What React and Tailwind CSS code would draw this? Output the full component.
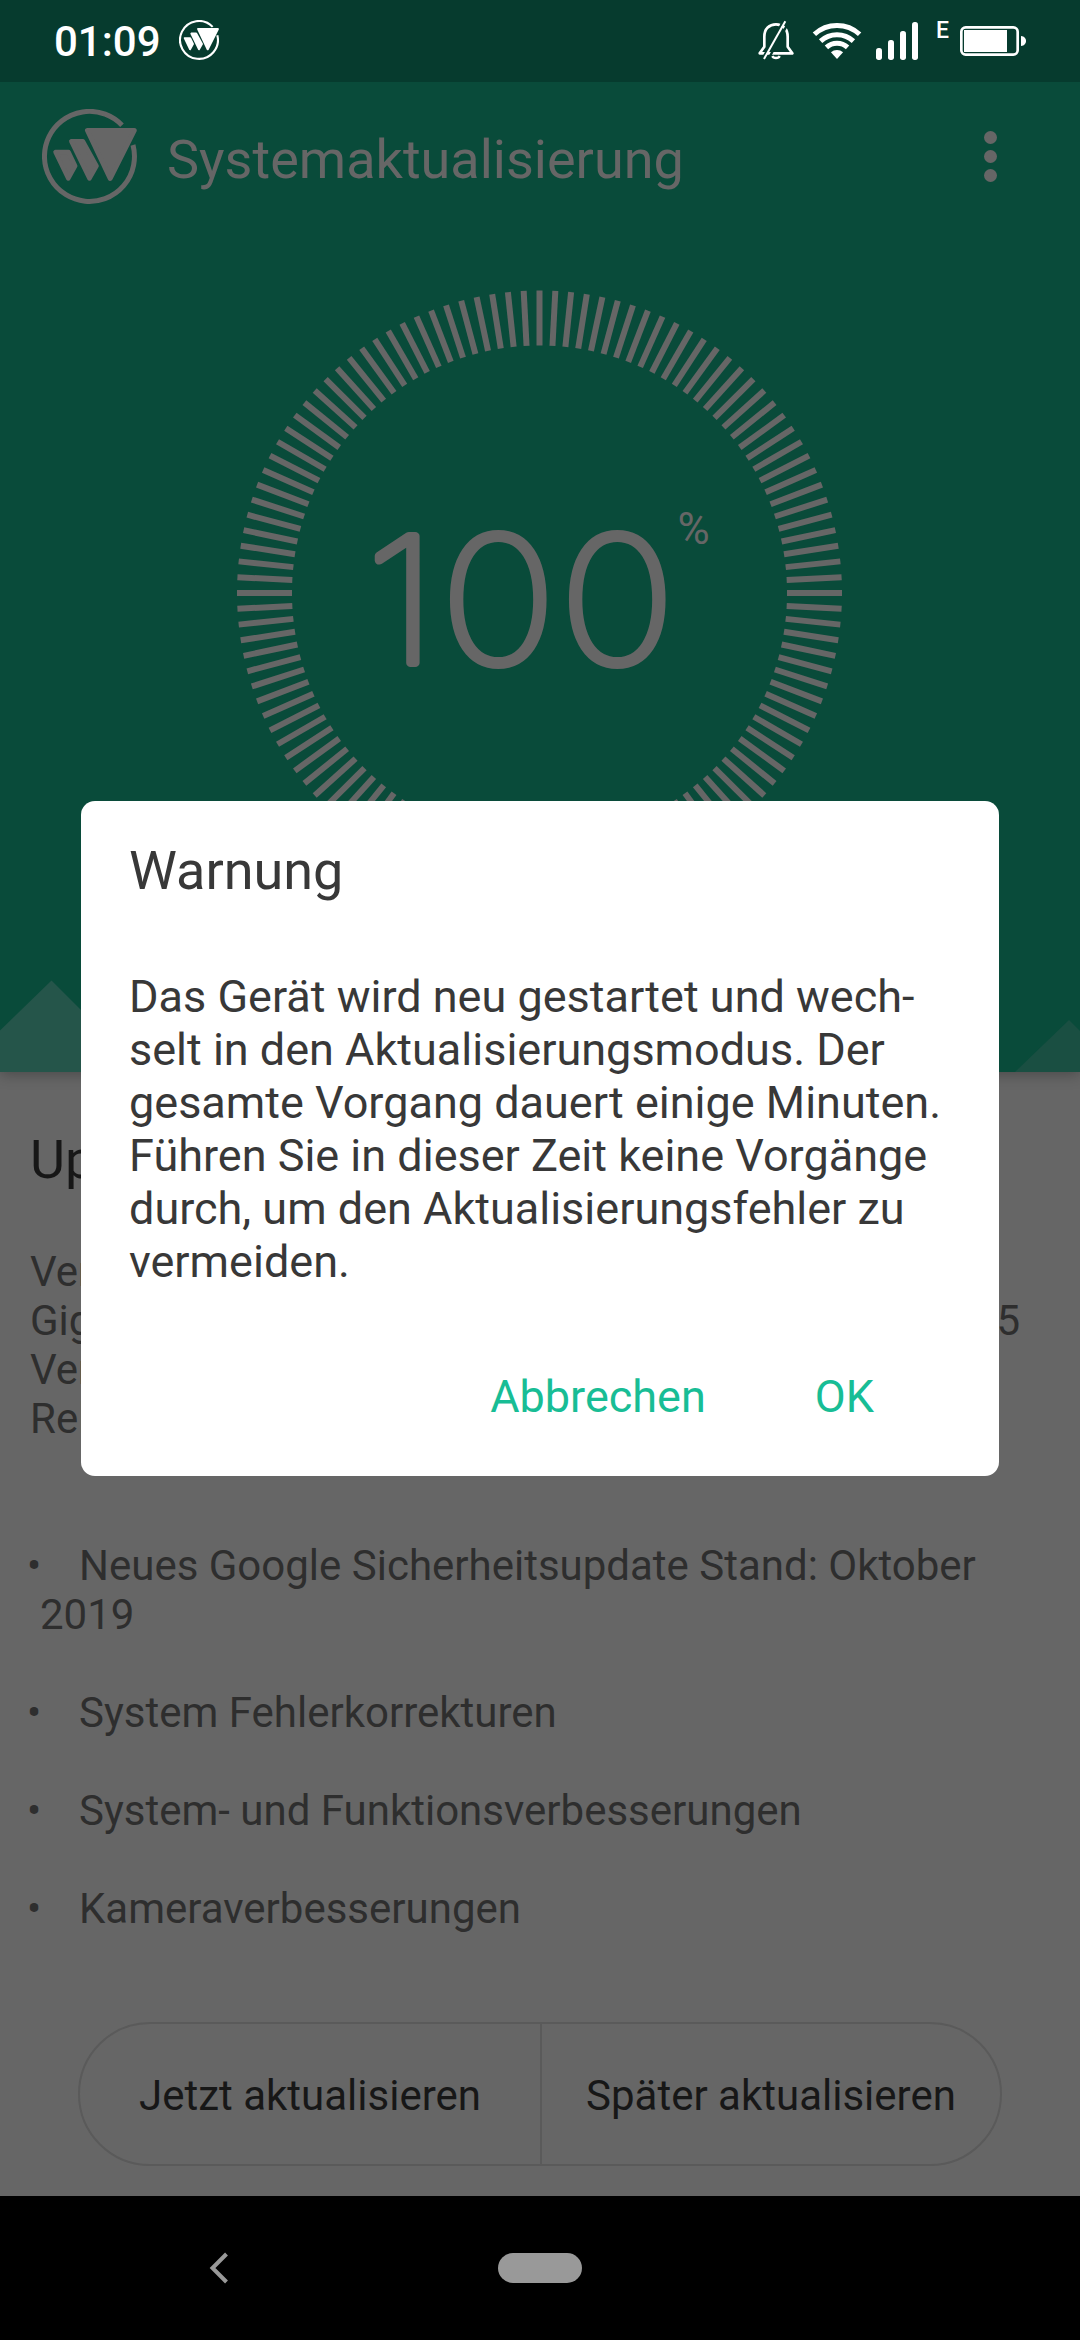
const TICKS = Array.from({ length: 120 }, (_, i) => i * 3);

const CHANGES = [
  'System Fehlerkorrekturen',
  'System- und Funktionsverbesserungen',
  'Kameraverbesserungen'
];

function Logo({ className }) {
  return (
    <svg viewBox="0 0 95 95" className={className} fill="currentColor" stroke="currentColor" strokeLinejoin="round">
      <path d="M91 36A45 45 0 1 1 80 16.3" fill="none" strokeWidth="5" />
      <path d="M45.5 21.5H92.3L68.2 69.5Z" strokeWidth="5" />
      <path d="M29.3 32.2H40.8L54.6 57L47.5 69.5Z" strokeWidth="4.5" />
      <path d="M13.5 43H26.5L33.2 57L26.3 69.5Z" strokeWidth="4.5" />
    </svg>
  );
}

function StatusBar() {
  return (
    <div className="relative z-20 h-[82px] bg-[#063b2e] text-white flex items-start pl-[54px] pr-[53px] pt-5">
      <span className="text-[42px] leading-[44px] font-medium w-[106px] whitespace-nowrap">01:09</span>
      <Logo className="w-10 h-10 ml-[19px]" />

      <div className="ml-auto flex">
        <svg viewBox="111 60 114 120" className="w-[38px] h-10" fill="none" stroke="currentColor" strokeWidth="8">
          <path d="M133 140V110C133 86 148 73 168 73S203 86 203 110V140L217 160H119Z" strokeLinejoin="round" />
          <path d="M157 168C160 176 176 176 179 168" strokeWidth="7" />
          <path d="M125 181L189 65M143 181L207 65" stroke="#063b2e" strokeWidth="7" />
          <path d="M132 177L196 64" strokeWidth="6" />
        </svg>
        <svg viewBox="276 60 150 120" className="w-[50px] h-10 ml-[17px]" fill="none" stroke="currentColor" strokeWidth="15">
          <path d="M283.2 102.8A100.5 100.5 0 0 1 418.8 102.8" />
          <path d="M301.8 123.1A73 73 0 0 1 400.2 123.1" />
          <path d="M319.3 142.3A47 47 0 0 1 382.7 142.3" />
          <path d="M351 177L332.8 157A27 27 0 0 1 369.2 157Z" fill="currentColor" stroke="none" />
        </svg>
        <svg viewBox="465 60 132 120" className="w-11 h-10 ml-[13px]" fill="currentColor">
          <rect x="468" y="144" width="18" height="36" rx="8" />
          <rect x="504" y="120" width="18" height="60" rx="8" />
          <rect x="540" y="93" width="18" height="87" rx="8" />
          <rect x="576" y="66" width="18" height="114" rx="8" />
        </svg>
        <span className="w-10 pl-[17px] text-[23px] leading-[22px] font-medium">E</span>
        <svg viewBox="717 60 204 120" className="w-[68px] h-10" fill="currentColor">
          <rect x="724" y="82" width="169" height="82" rx="13" fill="none" stroke="currentColor" strokeWidth="8" />
          <rect x="732" y="90" width="129" height="66" />
          <path d="M903 108C923 109 923 137 903 138Z" />
        </svg>
      </div>
    </div>
  );
}

function ProgressRing() {
  return (
    <svg viewBox="0 0 640 640" className="w-[640px] h-[640px] mx-auto" fill="#666" stroke="#666">
      {TICKS.map((angle) => (
        <path key={angle} d="M319.5 17.5V72.5" strokeWidth="6" transform={`rotate(${angle} 319.5 320)`} />
      ))}
      <text
        x="129.5 196.3 302.4"
        y="390"
        transform="scale(1.122 1)"
        strokeWidth="8"
        strokeLinejoin="round"
        className="font-['Inter'] font-thin text-[175px]"
      >
        100
      </text>
      <text x="457.5" y="270.5" stroke="none" className="font-['Roboto'] text-[44px]">%</text>
    </svg>
  );
}

function Hero() {
  return (
    <div className="relative z-10 h-[990px] bg-[#094b3a] text-[#666] shadow-[0_2px_14px_rgba(0,0,0,0.3)] flex flex-col">
      <div className="h-[191px] pl-[42px] pr-[83px] pt-[27px] flex items-start">
        <Logo className="w-[95px] h-[95px]" />
        <h1 className="ml-[30px] mt-[19px] text-[54px] leading-[64px] whitespace-nowrap">Systemaktualisierung</h1>
        <div className="ml-auto mt-[22px] flex flex-col gap-[6px]">
          <span className="w-[13px] h-[13px] rounded-full bg-[#666]" />
          <span className="w-[13px] h-[13px] rounded-full bg-[#666]" />
          <span className="w-[13px] h-[13px] rounded-full bg-[#666]" />
        </div>
      </div>
      <ProgressRing />
      <svg viewBox="0 0 1080 92" className="w-full h-[92px] mt-auto">
        <path d="M0 50.5L51.5 0.5L143 92H0Z" fill="#25554a" />
        <path d="M1015 92L1069 40L1080 51V92Z" fill="#1a4f42" />
      </svg>
    </div>
  );
}

function Details() {
  return (
    <div className="h-[1124px] bg-[#666] text-[#2e2e2e] text-[42px] leading-[49px] pt-[56px] flex flex-col">
      <h2 className="pl-[30px] text-[54px] leading-[64px] text-[#171717]">Update</h2>
      <div className="pl-[30px] pt-[55px]">
        <p>Version</p>
        <p className="w-[990px] flex justify-between">
          <span>Gigaset</span>
          <span>GS195</span>
        </p>
        <p>Version</p>
        <p>Release</p>
      </div>
      <ul className="pt-[98px] flex flex-col gap-[49px]">
        <li>
          <div className="flex">
            <span className="w-[79px] pl-[27px]">•</span>
            <span className="whitespace-nowrap">Neues Google Sicherheitsupdate Stand: Oktober</span>
          </div>
          <div className="pl-10">2019</div>
        </li>
        {CHANGES.map((text) => (
          <li key={text} className="flex">
            <span className="w-[79px] pl-[27px]">•</span>
            <span>{text}</span>
          </li>
        ))}
      </ul>
      <div className="mt-auto mb-[30px] mx-[78px] h-36 rounded-full border-2 border-[#5a5a5a] text-[#171717] flex">
        <button className="w-[462px] pt-[2px] border-r-2 border-[#5a5a5a]">Jetzt aktualisieren</button>
        <button className="flex-1 pt-[2px]">Später aktualisieren</button>
      </div>
    </div>
  );
}

function NavBar() {
  return (
    <div className="h-36 bg-black flex items-center pl-[208px]">
      <svg viewBox="0 0 22 32" className="w-[22px] h-8" fill="none" stroke="#999" strokeWidth="4">
        <path d="M18.5 2L4.5 16L18.5 30" />
      </svg>
      <span className="ml-[268px] w-[84px] h-[30px] rounded-full bg-[#999]" />
    </div>
  );
}

function WarningDialog() {
  return (
    <div className="absolute z-20 top-[801px] left-[81px] w-[918px] h-[675px] rounded-[14px] bg-white text-[#383838] px-12 pt-[38px]">
      <h2 className="text-[54px] leading-[64px]">Warnung</h2>
      <p className="mt-[67px] text-[45px] leading-[53px] whitespace-nowrap">
        Das Gerät wird neu gestartet und wech-<br />
        selt in den Aktualisierungsmodus. Der<br />
        gesamte Vorgang dauert einige Minuten.<br />
        Führen Sie in dieser Zeit keine Vorgänge<br />
        durch, um den Aktualisierungsfehler zu<br />
        vermeiden.
      </p>
      <div className="mt-[82px] pr-[77px] flex justify-end gap-[109px] text-[45px] leading-[53px] text-[#18bd95]">
        <button>Abbrechen</button>
        <button>OK</button>
      </div>
    </div>
  );
}

export default function App() {
  return (
    <div className="relative w-[1080px] h-[2340px] overflow-hidden flex flex-col font-['Roboto',sans-serif]">
      <StatusBar />
      <Hero />
      <Details />
      <NavBar />
      <WarningDialog />
    </div>
  );
}
